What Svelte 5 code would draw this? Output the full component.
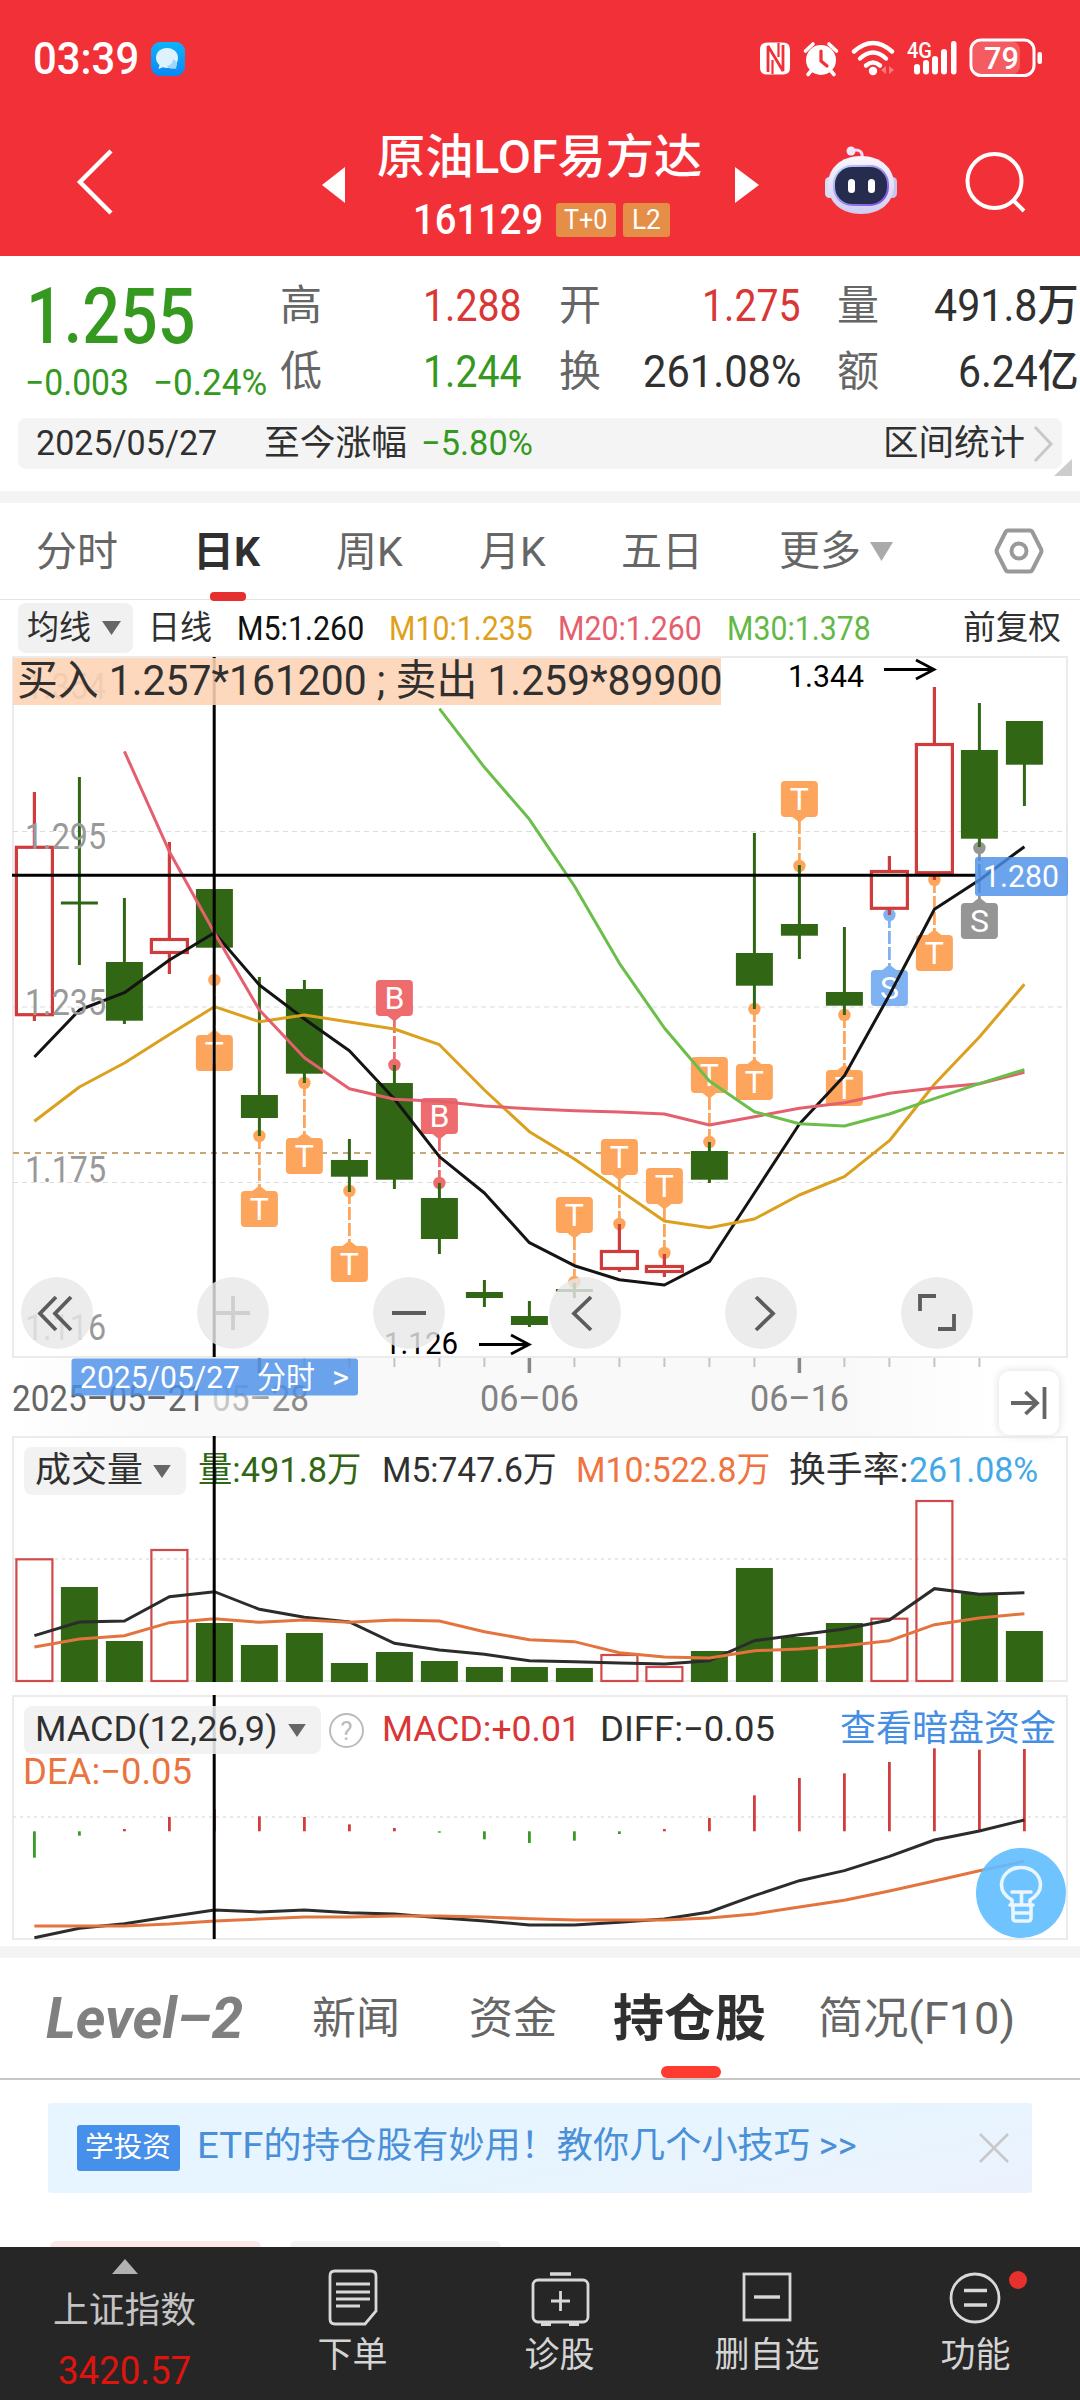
<script>
  // Squeezes or stretches a text run to an exact advance width.
  function fit(node, width) {
    const natural = node.offsetWidth;
    node.style.transform = `scaleX(${width / natural})`;
    node.style.marginRight = `${width - natural}px`;
  }

  const X = (i) => 34.4 + 45 * i;
  const pts = (ys, from = 0) => ys.map((y, k) => `${X(k + from)},${y}`).join(' ');

  // [up, high, bodyTop, bodyBottom, low] in canvas pixels
  const candles = [
    [1, 792, 847.3, 1014.7, 1021], [0, 777, 901.5, 904.5, 965], [0, 898, 962, 1020.7, 1024],
    [1, 842, 939.5, 952.5, 974], [0, 889, 889, 947.7, 947.7], [0, 977, 1095, 1118, 1136],
    [0, 980, 989, 1073.7, 1083], [0, 1139, 1160, 1176.7, 1192], [0, 1065, 1083, 1179.7, 1189],
    [0, 1183, 1198, 1239, 1254], [0, 1280, 1292, 1298, 1307], [0, 1301, 1316, 1325, 1327],
    [0, 1283, 1289, 1292, 1298], [1, 1224, 1251.5, 1268.5, 1272], [1, 1254, 1266.5, 1271.5, 1277],
    [0, 1142, 1151, 1179.7, 1183], [0, 833, 953, 985.7, 1009], [0, 865, 924, 935.7, 959],
    [0, 927, 992, 1005.7, 1015], [1, 856, 871.5, 908.3, 915], [1, 687, 744.5, 872.7, 880],
    [0, 703, 750, 838.7, 847], [0, 721, 721, 764.7, 806]
  ];

  const ma5 = [1057, 1010, 992.7, 960, 932.7, 985, 1019, 1050.7, 1099, 1156.7, 1193, 1242.7, 1265.7, 1279.7, 1285, 1261.7, 1193, 1124, 1075.7, 995, 909.3, 880, 846.7];
  const ma10 = [1121.3, 1087, 1063, 1034.5, 1006.7, 1021.7, 1015, 1022, 1029, 1044.7, 1090, 1131.7, 1159, 1190, 1221, 1227.7, 1219, 1195, 1176.7, 1140.7, 1084.3, 1037, 984.3];
  const ma20 = [751.3, 851.7, 932.7, 1010, 1057.7, 1088.7, 1099.3, 1101.3, 1106, 1108.7, 1110.7, 1112, 1114, 1125, 1116.7, 1108.3, 1102.7, 1093.3, 1088, 1083.7, 1072.3];
  const ma30 = [708.7, 767.3, 819.3, 886, 963.3, 1028, 1081, 1111.7, 1123.7, 1126, 1114, 1098.7, 1083.7, 1069.7];

  const orange = '#fda55d', red = '#ee6b6e', blue = '#7fb2f2', gray = '#959595';
  // [index, letter, fill, dotY, boxTop]
  const marks = [
    [4, 'T', orange, 980, 1035], [5, 'T', orange, 1136, 1191], [6, 'T', orange, 1083, 1138],
    [7, 'T', orange, 1191, 1246], [8, 'B', red, 1065, 980], [9, 'B', red, 1183, 1098],
    [12, 'T', orange, 1282, 1197], [13, 'T', orange, 1224, 1139], [14, 'T', orange, 1253, 1168],
    [15, 'T', orange, 1142, 1057], [16, 'T', orange, 1009, 1064], [17, 'T', orange, 866, 781],
    [18, 'T', orange, 1015, 1070], [19, 'S', blue, 915, 970], [20, 'T', orange, 880, 935],
    [21, 'S', gray, 848, 903]
  ];

  const volTop = [1559.3, 1587, 1641, 1550, 1623, 1645, 1633, 1663, 1652, 1661, 1667, 1667, 1668, 1655, 1667, 1651, 1568, 1637, 1623, 1618.7, 1501, 1593.3, 1631];
  const vs = (a, base) => a.map((v) => base + v / 3);
  const vol5 = vs([617, 576, 573, 500, 485, 538, 562, 576, 640, 660, 673, 692, 695, 699, 702, 692, 632, 614, 597, 570, 476, 493, 488], 1430);
  const vol10 = vs([651, 627, 617, 578, 566, 577, 570, 577, 570, 573, 605, 629, 635, 668, 681, 684, 662, 657, 647, 632, 584, 564, 551], 1430);

  const zero = 1831.3;
  const macd = vs([503, 437, 417, 381, 357, 379, 381, 403, 414, 428, 448, 459, 452, 432, 417, 384, 316, 264, 250, 216, 175, 179, 177], 1690);
  const diff = vs([743, 715, 701, 680, 660, 666, 660, 668, 672, 683, 693, 705, 705, 697, 687, 666, 617, 572, 542, 499, 450, 423, 390], 1690);
  const dea = vs([708, 708, 708, 702, 693, 687, 681, 681, 678, 678, 681, 686, 690, 690, 690, 684, 672, 651, 631, 603, 573, 542, 514], 1690);

  const ticks = Array.from({ length: 17 }, (_, k) => k + 5);
  const axis = [[849, '1.295'], [1015, '1.235'], [1182, '1.175'], [1340, '1.116'], [699, '1.354']];
</script>

<div class="app">
  <header>
    <div class="status">
      <span class="clock" use:fit={106}>03:39</span>
      <svg class="chat" width="34" height="34" viewBox="0 0 34 34">
        <defs><linearGradient id="cb" x1="0" y1="0" x2="0" y2="1"><stop offset="0" stop-color="#0cb4fb" /><stop offset="1" stop-color="#0a86f5" /></linearGradient></defs>
        <rect width="34" height="34" rx="9" fill="url(#cb)" />
        <path d="M16 6c6.500 0 11 4.300 11 10s-4.500 10-11 10c-1.500 0-3-.3-4.200-.8L7.500 27l1-4C6.300 21 5 18.700 5 16 5 10.300 9.500 6 16 6z" fill="#def2fe" />
        <path d="M22 17.500c3 1 4 2.500 4 4.500 0 1.500-.4 2.500-1 3.300l.4 1.700-2.200-.6c-3 .8-6-.4-7.200-2.400 3.500-.5 5.500-3 6-6.500z" fill="#9fd6fb" />
      </svg>
      <svg class="sys" width="290" height="44" viewBox="756 37 290 44">
        <path d="M767 42.500h16q7 0 7 7v18q0 7-7 7h-16q-7 0-7-7v-18q0-7 7-7z" fill="#fff" />
        <path d="M768 72V46l15 25V45" fill="none" stroke="#f23038" stroke-width="2.800" stroke-linejoin="bevel" />
        <path d="M772.500 60v14M778.500 43v14" fill="none" stroke="#f23038" stroke-width="2.200" />
        <circle cx="821" cy="60" r="15" fill="#fff" />
        <path d="M805.500 51l7.500-7M836.500 51l-7.500-7M811 71l-3 3.500M831 71l3 3.500" stroke="#fff" stroke-width="3.600" stroke-linecap="round" />
        <path d="M821 51v10l6 5" stroke="#f23038" stroke-width="3.200" fill="none" stroke-linecap="round" />
        <g fill="none" stroke="#fff" stroke-width="4.400" stroke-linecap="round">
          <path d="M854 51.500q19-17 38 0" /><path d="M860 58.500q13-12 26 0" /><path d="M866 65.500q7-6 14 0" />
        </g>
        <circle cx="873" cy="71" r="4.200" fill="#fff" />
        <path d="M881 70l5-4v8zM894 70l-5-4v8z" fill="#f9797d" />
        <text x="907" y="57.500" class="g4" textLength="25" lengthAdjust="spacingAndGlyphs">4G</text>
        <g fill="#fff"><rect x="914" y="64" width="6" height="10.500" rx="3" /><rect x="923" y="60" width="6" height="14.500" rx="3" /><rect x="932" y="56" width="6" height="18.500" rx="3" /><rect x="941" y="49" width="6" height="25.500" rx="3" /><rect x="951" y="41" width="5.500" height="33.500" rx="2.700" /></g>
        <rect x="973" y="41" width="47" height="34" rx="9" fill="#f55c62" />
        <rect x="971" y="40" width="63" height="35.500" rx="10" fill="none" stroke="#fff" stroke-width="3" />
        <rect x="1037.500" y="52" width="4.500" height="12" rx="2" fill="#fff" />
        <text x="984" y="69" class="bat" textLength="35" lengthAdjust="spacingAndGlyphs">79</text>
      </svg>
    </div>
    <nav class="top">
      <svg class="back" width="38" height="66" viewBox="0 0 38 66"><path d="M35 2L4 33l31 31" fill="none" stroke="#fff" stroke-width="4.400" /></svg>
      <svg class="arrow" width="23" height="36" viewBox="0 0 23 36"><path d="M0 18L23 0v36z" fill="#fff" /></svg>
      <div class="title">
        <h1><span use:fit={325}>原油LOF易方达</span></h1>
        <div class="code"><span use:fit={130}>161129</span><b><i use:fit={43}>T+0</i></b><b><i use:fit={29}>L2</i></b></div>
      </div>
      <svg class="arrow" width="24" height="36" viewBox="0 0 24 36"><path d="M24 18L0 0v36z" fill="#fff" /></svg>
      <svg class="robot" width="74" height="70" viewBox="0 0 74 70">
        <defs>
          <linearGradient id="hd" x1="0" y1="0" x2="0" y2="1"><stop offset="0" stop-color="#faf6ff" /><stop offset="1" stop-color="#cfccf2" /></linearGradient>
          <linearGradient id="rim" x1="0" y1="0" x2="1" y2="1"><stop offset="0" stop-color="#bfe0fb" /><stop offset="1" stop-color="#7c3fe0" /></linearGradient>
        </defs>
        <path d="M38 13c1-6-2-8-7-8" fill="none" stroke="#e9def5" stroke-width="3" /><circle cx="27" cy="6" r="4.500" fill="#efe8f8" />
        <rect x="1" y="32" width="9" height="21" rx="4.500" fill="#d9daf5" /><rect x="64" y="32" width="9" height="21" rx="4.500" fill="#c9c3ee" />
        <path d="M37 11c20 0 33 12 33 29S57 69 37 69 4 57 4 40s13-29 33-29z" fill="url(#hd)" />
        <rect x="9" y="20" width="56" height="41" rx="19" fill="url(#rim)" />
        <rect x="11" y="22" width="52" height="37" rx="17" fill="#262c4e" />
        <rect x="24" y="34" width="7" height="14" rx="3.500" fill="#fff" /><rect x="44" y="34" width="7" height="14" rx="3.500" fill="#fff" />
      </svg>
      <svg class="search" width="62" height="62" viewBox="0 0 62 62"><circle cx="29.500" cy="29" r="27" fill="none" stroke="#fff" stroke-width="4" /><path d="M49 49l10 10" stroke="#fff" stroke-width="4" /></svg>
    </nav>
  </header>

  <section class="quote">
    <div class="last">
      <div class="price"><span use:fit={169}>1.255</span></div>
      <div class="chg"><span use:fit={104}>−0.003</span><span use:fit={114}>−0.24%</span></div>
    </div>
    <div class="stats">
      <label>高</label><span class="up" use:fit={99}>1.288</span>
      <label>开</label><span class="up" use:fit={99}>1.275</span>
      <label>量</label><span use:fit={145}>491.8万</span>
      <label>低</label><span class="down" use:fit={99}>1.244</span>
      <label>换</label><span use:fit={158}>261.08%</span>
      <label>额</label><span use:fit={121}>6.24亿</span>
    </div>
  </section>

  <section class="range">
    <div class="bar">
      <span use:fit={181}>2025/05/27</span>
      <span use:fit={143}>至今涨幅</span>
      <span class="down" use:fit={112}>−5.80%</span>
      <span use:fit={142}>区间统计</span>
      <svg width="22" height="36" viewBox="0 0 22 36"><path d="M2 1l16 17L2 35" fill="none" stroke="#c8c8c8" stroke-width="3" /></svg>
    </div>
    <svg class="corner" width="18" height="17" viewBox="0 0 18 17"><path d="M18 0v17H0z" fill="#ccc" /></svg>
  </section>

  <nav class="periods">
    <span>分时</span><span class="on">日K</span><span>周K</span><span>月K</span><span>五日</span>
    <span class="more">更多<svg width="23" height="19" viewBox="0 0 23 19"><path d="M0 0h23L11.500 19z" fill="#aaa" /></svg></span>
    <svg width="50" height="46" viewBox="0 0 50 46"><path d="M14 2.500h22q1.500 0 2.300 1.300L47 21q.8 2 0 4L38.300 42q-.8 1.500-2.300 1.500H14q-1.500 0-2.300-1.500L3 25q-.8-2 0-4L11.700 3.800Q12.500 2.500 14 2.500z" fill="none" stroke="#999" stroke-width="4" /><circle cx="25" cy="23" r="7.500" fill="none" stroke="#999" stroke-width="4" /></svg>
  </nav>

  <div class="malegend">
    <span class="pick"><span use:fit={64}>均线</span><svg width="19" height="14" viewBox="0 0 19 14"><path d="M0 0h19L9.500 14z" fill="#666" /></svg></span>
    <span use:fit={64}>日线</span>
    <span class="k" use:fit={127}>M5:1.260</span>
    <span class="y" use:fit={144}>M10:1.235</span>
    <span class="p" use:fit={144}>M20:1.260</span>
    <span class="g" use:fit={144}>M30:1.378</span>
    <span use:fit={98}>前复权</span>
  </div>

  <section class="kline">
    <svg width="1080" height="780" viewBox="0 656 1080 780">
      <defs>
        <linearGradient id="strip" x1="0" x2="1" y1="0" y2="0"><stop offset="0" stop-color="#f7f7f7" stop-opacity="0" /><stop offset=".15" stop-color="#f9f9f9" /><stop offset=".85" stop-color="#f9f9f9" /><stop offset="1" stop-color="#fff" /></linearGradient>
        <linearGradient id="fade"><stop offset="0" stop-color="#d5d5d5" /><stop offset=".75" stop-color="#8a8a8a" /></linearGradient>
      </defs>
      <rect x="14" y="1358" width="980" height="78" fill="url(#strip)" />
      <rect x="13" y="657" width="1054" height="700" fill="none" stroke="#ebebeb" stroke-width="2" />
      <g stroke="#dcdcdc" stroke-width="1.200" stroke-dasharray="5 4"><path d="M13 831.500H1067M13 1007H1067M13 1182.500H1067" /></g>
      <path d="M13 1153H1067" stroke="#c8a676" stroke-width="1.800" stroke-dasharray="6 5" />

      {#each marks as [i, letter, fill, dot, top]}
        <g {fill}>
          <path d={`M${X(i)} ${dot}V${dot < top ? top - 4 : top + 40}`} stroke={fill} stroke-width="2.800" stroke-dasharray="13 3" />
          <circle cx={X(i)} cy={dot} r="6.200" />
          <rect x={X(i) - 18.500} y={top} width="37" height="36" rx="4" />
          {#if dot < top}<path d={`M${X(i) - 7} ${top}l7-5.500 7 5.500z`} />{:else}<path d={`M${X(i) - 7} ${top + 36}l7 5.500 7-5.500z`} />{/if}
          <text class="mk" x={X(i)} y={top + 29}>{letter}</text>
        </g>
      {/each}

      {#each candles as [up, hi, a, b, lo], i}
        {#if up}
          <g fill="none" stroke="#d03c3c" stroke-width="3.200"><path d={`M${X(i)} ${hi}V${a}M${X(i)} ${b}V${lo}`} /><rect x={X(i) - 18} y={a} width="36" height={b - a} /></g>
        {:else}
          <g fill="#306614"><rect x={X(i) - 1.500} y={hi} width="3" height={lo - hi} /><rect x={X(i) - 18.500} y={a} width="37" height={b - a} /></g>
        {/if}
      {/each}

      <g fill="none" stroke-width="3" stroke-linejoin="round">
        <polyline points={pts(ma5)} stroke="#141414" />
        <polyline points={pts(ma10)} stroke="#dba01e" />
        <polyline points={pts(ma20, 2)} stroke="#e4606f" />
        <polyline points={pts(ma30, 9)} stroke="#6cbe4a" />
      </g>

      {#each axis as [y, t]}
        <text x="25" {y} class="axis" textLength="81" lengthAdjust="spacingAndGlyphs">{t}</text>
      {/each}
      <path d="M214.200 657V1357M12 875.300H976" stroke="#000" stroke-width="3" />

      <text x="788" y="687" class="ext" textLength="76" lengthAdjust="spacingAndGlyphs">1.344</text>
      <text x="384" y="1354" class="ext" textLength="74" lengthAdjust="spacingAndGlyphs">1.126</text>
      <path d="M884 669.500h50M916 660l18 9.500-18 9.500M479 1344.500h50M511 1335l18 9.500-18 9.500" fill="none" stroke="#000" stroke-width="2.800" />

      {#each ticks as i}
        {#if i === 5 || i === 11 || i === 17}<path d={`M${X(i)} 1358v15`} stroke="#888" stroke-width="3.500" />
        {:else}<path d={`M${X(i)} 1358v9`} stroke="#c4c4c4" stroke-width="2" />{/if}
      {/each}
      <g class="date">
        <text x="12" y="1411" textLength="193" lengthAdjust="spacingAndGlyphs" fill="#666">2025–05–21</text>
        <text x="212" y="1411" textLength="97" lengthAdjust="spacingAndGlyphs" fill="url(#fade)">05–28</text>
        <text x="480" y="1411" textLength="99" lengthAdjust="spacingAndGlyphs" fill="#828282">06–06</text>
        <text x="750" y="1411" textLength="99" lengthAdjust="spacingAndGlyphs" fill="#828282">06–16</text>
      </g>
      <g fill="#4a90e9" fill-opacity=".82"><rect x="975" y="857" width="93" height="39" rx="3" /><rect x="71.500" y="1358.500" width="286.500" height="37" rx="3" /></g>
      <g class="tag">
        <text x="983" y="887" textLength="76" lengthAdjust="spacingAndGlyphs">1.280</text>
        <text x="80" y="1388" textLength="160" lengthAdjust="spacingAndGlyphs">2025/05/27</text>
        <text x="257" y="1388" textLength="58" lengthAdjust="spacingAndGlyphs">分时</text>
        <text x="332" y="1388" textLength="17" lengthAdjust="spacingAndGlyphs">&gt;</text>
      </g>
    </svg>
    <div class="bid"><span use:fit={705}>买入 1.257*161200 ; 卖出 1.259*89900</span></div>
    <div class="controls">
      <button aria-label="fast back"><svg viewBox="0 0 72 72"><path d="M35 20L19 36.500 35 53M50 20L34 36.500 50 53" /></svg></button>
      <button aria-label="zoom in" class="off"><svg viewBox="0 0 72 72"><path d="M36 19v34M19 36h34" /></svg></button>
      <button aria-label="zoom out"><svg viewBox="0 0 72 72"><path d="M19 36h34" stroke-width="4" /></svg></button>
      <button aria-label="previous"><svg viewBox="0 0 72 72"><path d="M42 20L25 36.500 42 53" /></svg></button>
      <button aria-label="next"><svg viewBox="0 0 72 72"><path d="M31 20l17 16.500L31 53" /></svg></button>
      <button aria-label="fullscreen"><svg viewBox="0 0 72 72"><path d="M19 34V19h16M53 37v15H37" /></svg></button>
    </div>
    <div class="latest"><svg width="36" height="34" viewBox="0 0 36 34"><path d="M0 17h25M14.500 6L26 17 14.500 28M33.500 1v32" fill="none" stroke="#666" stroke-width="3.800" /></svg></div>
  </section>

  <section class="panel">
    <svg class="plot" width="1080" height="259" viewBox="0 1436 1080 259">
      <rect x="13" y="1437" width="1054" height="244" fill="none" stroke="#ebebeb" stroke-width="2" />
      <path d="M13 1559H1067" stroke="#e2e2e2" stroke-width="1.500" stroke-dasharray="3 4" />
      {#each volTop as y, i}
        {#if candles[i][0]}<rect x={X(i) - 18} {y} width="36" height={1681 - y} fill="none" stroke="#d04a4a" stroke-width="2.200" />
        {:else}<rect x={X(i) - 18.500} {y} width="37" height={1682 - y} fill="#306614" />{/if}
      {/each}
      <g fill="none" stroke-width="3"><polyline points={pts(vol5)} stroke="#2c2c2c" /><polyline points={pts(vol10)} stroke="#e4743e" /></g>
    </svg>
    <div class="vlegend">
      <span class="pick"><span use:fit={108}>成交量</span><svg width="18" height="13" viewBox="0 0 19 14"><path d="M0 0h19L9.500 14z" fill="#666" /></svg></span>
      <span class="v" use:fit={163}>量:491.8万</span>
      <span use:fit={175}>M5:747.6万</span>
      <span class="o" use:fit={194}>M10:522.8万</span>
      <span use:fit={119}>换手率:</span>
      <span class="b" use:fit={129}>261.08%</span>
    </div>
    <svg class="plot" width="1080" height="246" viewBox="0 1436 1080 246"><path d="M214.200 1436V1682" stroke="#000" stroke-width="3" /></svg>
  </section>

  <section class="panel macd">
    <svg class="plot" width="1080" height="251" viewBox="0 1695 1080 251">
      <rect x="13" y="1696" width="1054" height="243" fill="none" stroke="#ebebeb" stroke-width="2" />
      <path d="M13 1817H1067" stroke="#e2e2e2" stroke-width="1.500" stroke-dasharray="3 4" />
      {#each macd as y, i}
        <path d={`M${X(i)} ${zero}V${y}`} stroke={y < zero ? '#d23c3c' : '#3a9a28'} stroke-width="2.800" />
      {/each}
      <g fill="none" stroke-width="3"><polyline points={pts(diff)} stroke="#2c2c2c" /><polyline points={pts(dea)} stroke="#e4743e" /></g>
      <path d="M214.200 1695V1939" stroke="#000" stroke-width="3" />
      <circle cx="1021" cy="1893" r="45" fill="#5fbcff" fill-opacity=".9" />
      <g fill="none" stroke="#e9f6ff" stroke-width="3.600" stroke-linejoin="round" stroke-linecap="round">
        <path d="M1012 1905v-5c-7-4-10.500-9-10.500-15 0-10 8.500-17.500 19.500-17.500s19.500 7.500 19.500 17.500c0 6-3.500 11-10.500 15v5" />
        <path d="M1012 1892h19M1021.500 1892v13M1010 1905h23" /><path d="M1013 1906v12q0 3 3 3h12q3 0 3-3v-12M1014 1913h17" />
      </g>
    </svg>
    <div class="mlegend">
      <span class="pick"><span use:fit={243}>MACD(12,26,9)</span><svg width="18" height="13" viewBox="0 0 19 14"><path d="M0 0h19L9.500 14z" fill="#666" /></svg></span>
      <span class="q">?</span>
      <span class="up" use:fit={199}>MACD:+0.01</span>
      <span use:fit={175}>DIFF:−0.05</span>
      <span class="link" use:fit={216}>查看暗盘资金</span>
    </div>
    <div class="dea"><span use:fit={169}>DEA:−0.05</span></div>
  </section>

  <nav class="tabs">
    <span class="l2"><span use:fit={197}>Level–2</span></span><span><span use:fit={88}>新闻</span></span><span><span use:fit={88}>资金</span></span><span class="on"><span use:fit={153}>持仓股</span></span><span><span use:fit={197}>简况(F10)</span></span>
  </nav>

  <div class="tip">
    <b><span use:fit={86}>学投资</span></b>
    <span use:fit={143}>ETF的持</span>
    <span use:fit={517}>仓股有妙用！教你几个小技巧 &gt;&gt;</span>
    <svg width="30" height="30" viewBox="0 0 30 30"><path d="M1 1l28 28M29 1L1 29" stroke="#c8c8c8" stroke-width="2.500" /></svg>
  </div>

  <div class="pills"><i></i><i></i></div>

  <footer>
    <div class="index">
      <svg width="26" height="15" viewBox="0 0 26 15"><path d="M13 0l13 15H0z" fill="#b2b2b2" /></svg>
      <span use:fit={143}>上证指数</span>
      <em><span use:fit={133}>3420.57</span></em>
    </div>
    <div class="item">
      <svg width="60" height="60" viewBox="0 0 60 60"><g fill="none" stroke="#d8d8d8" stroke-width="2.800"><path d="M12 4h36q5 0 5 5v35L42 57H12q-5 0-5-5V9q0-5 5-5z" /><path d="M13 17h34M13 25h34M13 32h34M13 39h24" stroke-width="3.200" /></g></svg>
      <span>下单</span>
    </div>
    <div class="item">
      <svg width="60" height="60" viewBox="0 0 60 60"><g fill="none" stroke="#d8d8d8" stroke-width="2.800"><rect x="3" y="13" width="55" height="42" rx="5" /><path d="M20 7h21" stroke-width="3.500" /><path d="M30.500 24v20M21 34h19" /><path d="M11 57h10M39 57h10" stroke-width="4" /></g></svg>
      <span>诊股</span>
    </div>
    <div class="item">
      <svg width="60" height="60" viewBox="0 0 60 60"><g fill="none" stroke="#d8d8d8" stroke-width="2.800"><rect x="7" y="7" width="46" height="46" /><path d="M17 30h26" stroke-width="3.400" /></g></svg>
      <span>删自选</span>
    </div>
    <div class="item">
      <svg width="60" height="60" viewBox="0 0 60 60"><g fill="none" stroke="#d8d8d8" stroke-width="2.800"><circle cx="29" cy="31" r="24" /><path d="M18 23.500h23M18 38h23" stroke-width="3.400" /></g></svg>
      <span>功能</span><i class="dot"></i>
    </div>
  </footer>
</div>

<style>
  :global(body) { margin: 0; background: #fff; }
  .app { width: 1080px; height: 2400px; overflow: hidden; display: flex; flex-direction: column; background: #fff; color: #303030; font-family: Roboto, 'Noto Sans CJK SC', sans-serif; }
  .app > * { flex: none; }
  span, i, em, b, h1 { white-space: pre; font-style: normal; font-weight: 400; margin: 0; }
  span, i { transform-origin: 0 50%; }
  svg { display: block; flex: none; }
  svg text { font-family: Roboto, 'Noto Sans CJK SC', sans-serif; }
  .up { color: #d93636; } .down { color: #35991f; }

  header { height: 255.500px; background: #f23038; color: #fff; }
  .status { height: 118px; display: flex; align-items: center; padding-left: 33px; }
  .clock { font-size: 45px; line-height: 60px; font-weight: 500; display: block; }
  .chat { margin-left: 12px; }
  .sys { margin-left: auto; margin-right: 34px; }
  .g4 { font-size: 22px; font-weight: 500; fill: #fff; } .bat { font-size: 32px; font-weight: 500; fill: #fff; }
  .top { display: grid; grid-template-columns: 246px 55px 358px 89px 141px 70px; padding-left: 76px; align-items: start; }
  .back { margin-top: 31px; } .arrow { margin-top: 49px; } .robot { margin-top: 27px; } .search { margin-top: 34px; }
  .title { padding-top: 9px; width: 325px; }
  h1 { height: 60px; line-height: 60px; font-size: 47px; }
  h1 span { display: inline-block; font-weight: 500; }
  .code { height: 66px; display: flex; align-items: center; justify-content: center; font-size: 42px; line-height: 50px; padding-left: 4px; }
  .code > span { font-weight: 500; }
  .code b { background: #e58e48; border-radius: 3px; height: 34px; width: 60px; margin-left: 12px; display: flex; align-items: center; justify-content: center; font-size: 28px; line-height: 34px; }
  .code b + b { width: 47px; margin-left: 7px; }

  .quote { height: 162.500px; display: flex; }
  .last { width: 280px; color: #35991f; padding-top: 21px; box-sizing: border-box; }
  .price { height: 80px; line-height: 80px; font-size: 77px; font-weight: 500; padding-left: 26px; }
  .price span { display: inline-block; font-weight: 500; }
  .chg { display: flex; height: 52px; line-height: 52px; font-size: 36px; padding-left: 25px; gap: 24px; }
  .chg span { font-weight: 450; }
  .stats { display: grid; grid-template-columns: 42px 200px 79px 200px 78px 200px; grid-template-rows: 66px 66px; padding-top: 17px; justify-items: end; line-height: 66px; font-size: 44px; }
  .stats label { font-size: 42px; color: #666; }
  .stats span { font-weight: 450; }

  .range { height: 73px; position: relative; }
  .bar { margin: 0 18px; height: 51px; line-height: 49px; border-radius: 8px; background: #f4f4f4; display: grid; grid-template-columns: 228px 157px 462px 150px 30px; padding-left: 18px; align-items: center; font-size: 35px; justify-items: start; }
  .corner { position: absolute; right: 8px; top: 41px; }

  .periods { border-top: 12px solid #f4f4f4; height: 96px; border-bottom: 1.500px solid #e4e4e4; display: grid; grid-template-columns: 159px 141px 143px 142px 158px 215px 50px; padding-left: 36px; font-size: 41px; line-height: 98px; color: #666; }
  .periods > svg { margin-top: 25px; }
  .on { font-weight: 700; color: #303030; position: relative; }
  .periods .on { left: -2px; }
  .periods .on::after { content: ''; position: absolute; left: 17px; bottom: 0; width: 36px; height: 9px; border-radius: 4px; background: #e62f2f; }
  .more { display: flex; align-items: center; gap: 9px; height: 96px; }

  .malegend { height: 56px; line-height: 50px; padding-left: 18px; display: grid; grid-template-columns: 130px 89px 152px 169px 169px 236px 100px; align-items: center; justify-items: start; font-size: 33px; }
  .malegend .k, .malegend .y, .malegend .p, .malegend .g { font-weight: 450; padding-top: 2px; }
  .pick { background: #f1f1f1; border-radius: 8px; display: flex; align-items: center; gap: 11px; height: 50px; padding: 0 12px 0 9px; }
  .k { color: #111; } .y { color: #dfa01c; } .p { color: #e4606f; } .g { color: #63b946; }

  .kline { height: 780px; position: relative; }
  .mk { font-size: 32px; fill: #fff; text-anchor: middle; }
  .axis { font-size: 36px; fill: #999; font-weight: 450; }
  .ext { font-size: 31px; fill: #000; }
  .date { font-size: 36px; }
  .tag { font-size: 31px; fill: #fff; }
  .bid { position: absolute; left: 13px; top: 2px; width: 704px; height: 47px; line-height: 46px; padding-left: 4px; background: rgba(253, 211, 180, .88); font-size: 42px; }
  .bid span { display: inline-block; }
  .controls { position: absolute; left: 21px; top: 621px; display: flex; gap: 104px; }
  button { border: 0; padding: 0; width: 72px; height: 72px; border-radius: 50%; background: rgba(232, 232, 232, .82); }
  button path { fill: none; stroke: #5c5c5c; stroke-width: 3.800; }
  .off path { stroke: #cfcfcf; }
  .latest { position: absolute; left: 999px; top: 715px; width: 60px; height: 64px; border-radius: 11px; background: #fff; box-shadow: 0 0 10px rgba(0, 0, 0, .14); display: flex; align-items: center; justify-content: center; }

  .panel { position: relative; height: 259px; padding-top: 11px; box-sizing: border-box; }
  .macd { height: 251px; }
  .plot { position: absolute; left: 0; top: 0; }
  .vlegend, .mlegend { position: relative; padding-left: 24px; display: grid; align-items: center; justify-items: start; height: 48px; line-height: 48px; font-size: 35px; }
  .vlegend { grid-template-columns: 174px 184px 194px 213px 120px 140px; }
  .mlegend { grid-template-columns: 305px 53px 218px 240px 220px; }
  .panel .pick { height: 48px; padding: 0 15px 0 11px; gap: 10px; background: rgba(240, 240, 240, .88); }
  .v { color: #306614; } .o { color: #ef7440; } .b { color: #45a8e6; } .link { color: #458ee4; font-size: 36px; line-height: 44px; padding-bottom: 3px; }
  .q { width: 31px; height: 31px; border: 2.500px solid #bbb; border-radius: 50%; color: #bbb; font-size: 26px; line-height: 32px; text-align: center; }
  .dea { position: relative; height: 34px; line-height: 36px; padding-left: 23px; font-size: 36px; color: #ea7440; }
  .dea span { display: inline-block; }

  .tabs { border-top: 12px solid #f4f4f4; height: 120px; border-bottom: 2px solid #c8c8c8; display: grid; grid-template-columns: 266px 157px 144px 205px 220px; padding-left: 46px; font-size: 44px; line-height: 122px; color: #666; }
  .tabs > span { height: 120px; }
  .tabs span span { display: inline-block; }
  .l2 > span { font-size: 57px; font-style: italic; font-weight: 700; color: #808080; }
  .tabs .on { font-size: 50px; }
  .tabs .on span { font-weight: 700; }
  .tabs .on::after { content: ''; position: absolute; left: 48px; bottom: 0; width: 60px; height: 12px; border-radius: 6px; background: #fd3b30; }

  .tip { margin: 23px 48px 0; height: 90px; border-radius: 3px; background: linear-gradient(170deg, #e6f5ff 50%, #ecf2fd); display: grid; grid-template-columns: 120px 143px 639px 30px; align-items: center; padding-left: 29px; justify-items: start; font-size: 36px; line-height: 86px; color: #4a8fd8; }
  .tip > span { height: 90px; }
  .tip b { width: 103px; height: 46px; border-radius: 3px; background: #468fea; color: #fff; display: flex; align-items: center; justify-content: center; font-size: 28px; line-height: 44px; }

  .pills { height: 54px; padding: 0 50px; display: flex; gap: 29px; align-items: flex-end; }
  .pills i { width: 211px; height: 6px; border-radius: 10px 10px 0 0; background: #fde8e8; }
  .pills i + i { background: #f4f4f4; }

  footer { height: 153px; background: #262626; display: grid; grid-template-columns: 249px 207px 207px 208px 209px; color: #d4d4d4; font-size: 35px; }
  .index { display: flex; flex-direction: column; align-items: center; padding-top: 12px; color: #c4c4c4; }
  .index > span { line-height: 40px; margin-top: 17px; font-size: 36px; }
  .index em { line-height: 40px; margin-top: 20px; font-size: 38px; color: #e0140e; }
  .index em span { display: inline-block; }
  .item { display: flex; flex-direction: column; align-items: center; padding-top: 20px; position: relative; }
  .item > span { line-height: 40px; margin-top: 9px; }
  .dot { position: absolute; width: 18px; height: 18px; border-radius: 50%; background: #e8302f; left: 138px; top: 24px; }
</style>
